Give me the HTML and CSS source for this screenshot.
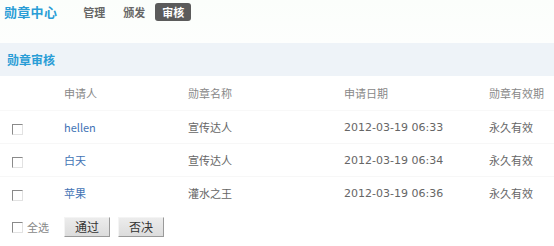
FILE: index.html
```html
<!DOCTYPE html>
<html lang="zh">
<head>
<meta charset="utf-8">
<title>勋章审核</title>
<link rel="stylesheet" href="styles.css">
</head>
<body>
<div class="page">
  <header class="topbar">
    <h1 class="brand">勋章中心</h1>
    <nav class="nav">
      <a class="nav-item">管理</a>
      <a class="nav-item">颁发</a>
      <a class="nav-item active">审核</a>
    </nav>
  </header>
  <div class="band"><h2 class="band-title">勋章审核</h2></div>
  <table class="grid">
    <colgroup>
      <col class="c-check"><col class="c-name"><col class="c-badge"><col class="c-date"><col class="c-valid">
    </colgroup>
    <thead>
      <tr><th></th><th>申请人</th><th>勋章名称</th><th>申请日期</th><th>勋章有效期</th></tr>
    </thead>
    <tbody>
      <tr><td><span class="cb"></span></td><td><a class="user">hellen</a></td><td>宣传达人</td><td class="date">2012-03-19 06:33</td><td>永久有效</td></tr>
      <tr><td><span class="cb"></span></td><td><a class="user">白天</a></td><td>宣传达人</td><td class="date">2012-03-19 06:34</td><td>永久有效</td></tr>
      <tr><td><span class="cb"></span></td><td><a class="user">苹果</a></td><td>灌水之王</td><td class="date">2012-03-19 06:36</td><td>永久有效</td></tr>
    </tbody>
  </table>
  <div class="footer">
    <label class="all"><span class="cb"></span>全选</label>
    <button class="btn">通过</button>
    <button class="btn">否决</button>
  </div>
</div>
</body>
</html>
```
FILE: styles.css
```css
html, body {
  margin: 0;
  padding: 0;
  background: #fff;
}
body {
  font-family: "Noto Sans CJK SC", "Liberation Sans", sans-serif;
  color: #666;
  font-size: 11px;
}
.page {
  width: 554px;
  height: 246px;
  overflow: hidden;
}
.topbar {
  height: 43px;
  display: flex;
  align-items: flex-start;
  background: linear-gradient(#fbfefb, #fdfefd);
  box-sizing: border-box;
  padding: 3px 0 0 4px;
}
.brand {
  margin: 0;
  font-size: 13px;
  line-height: 18px;
  font-weight: bold;
  color: #2a9dd6;
  letter-spacing: 0.3px;
}
.nav {
  display: flex;
  margin-left: 26px;
}
.nav-item {
  font-size: 11px;
  font-weight: bold;
  color: #666;
  line-height: 18px;
}
.nav-item + .nav-item { margin-left: 18px; }
.nav-item.active {
  margin-left: 10px;
  background: #5b5b5b;
  color: #fff;
  border-radius: 3px;
  padding: 0 7px;
}
.band {
  height: 33px;
  background: #eef3f8;
  display: flex;
  align-items: center;
  padding-left: 7px;
}
.band-title {
  margin: 0;
  font-size: 12px;
  font-weight: bold;
  color: #2a9dd6;
}
.grid {
  border-collapse: collapse;
  table-layout: fixed;
  width: 554px;
}
.c-check { width: 64px; }
.c-name { width: 124px; }
.c-badge { width: 156px; }
.c-date { width: 145px; }
.c-valid { width: 65px; }
.grid th {
  font-weight: normal;
  text-align: left;
  color: #888;
  font-size: 11px;
  height: 34px;
  padding: 0;
  border-bottom: 1px solid #f8f8f8;
}
.grid td {
  height: 32px;
  padding: 0;
  font-size: 11px;
  color: #666;
  border-bottom: 1px solid #f7f7f7;
}
.grid tbody tr:last-child td { border-bottom: none; height: 32px; }
.grid td:first-child { padding-left: 12px; }
.user {
  color: #4373b5;
  font-size: 11px;
}
.date {
  font-family: "DejaVu Sans", sans-serif;
  font-size: 12px;
  color: #707070;
}
.cb {
  display: inline-block;
  width: 9px;
  height: 9px;
  border-top: 1px solid #8a8a8a;
  border-left: 1px solid #8a8a8a;
  border-right: 1px solid #e2e2e2;
  border-bottom: 1px solid #e2e2e2;
  vertical-align: middle;
  background: #fff;
}
.footer {
  display: flex;
  align-items: center;
  padding: 8px 0 0 12px;
  gap: 8px;
}
.all {
  display: flex;
  align-items: center;
  gap: 4px;
  color: #888;
  font-size: 11px;
  margin-right: 7px;
}
.btn {
  font-family: "Noto Sans CJK SC", sans-serif;
  font-size: 12px;
  color: #333;
  width: 46px;
  height: 20px;
  padding: 0;
  background: linear-gradient(#ececec, #dcdcdc);
  border-top: 1px solid #f4f4f4;
  border-left: 1px solid #f4f4f4;
  border-right: 1px solid #9a9a9a;
  border-bottom: 1px solid #9a9a9a;
  border-radius: 0;
  line-height: 18px;
}
```
